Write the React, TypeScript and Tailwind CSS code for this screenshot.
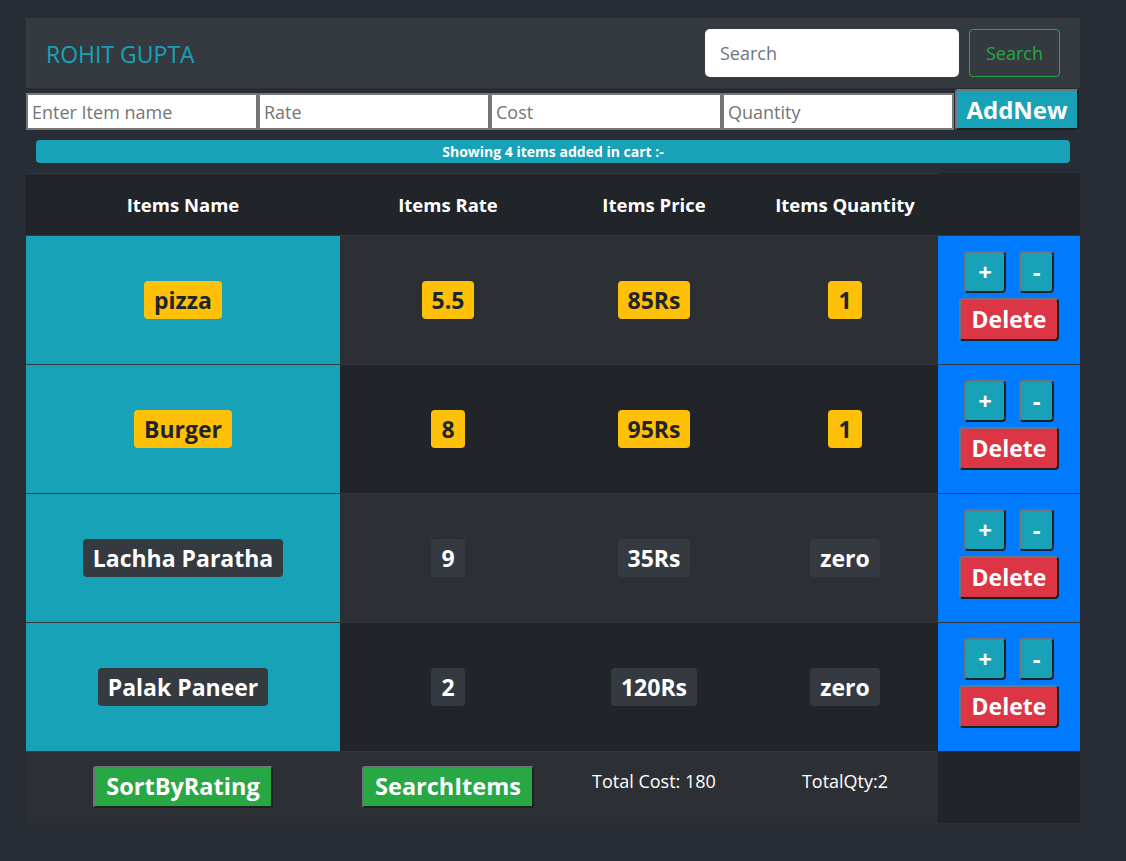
import React from 'react';

type Item = { name: string; rate: string; price: string; qty: string; hot: boolean };

const items: Item[] = [
  { name: 'pizza', rate: '5.5', price: '85Rs', qty: '1', hot: true },
  { name: 'Burger', rate: '8', price: '95Rs', qty: '1', hot: true },
  { name: 'Lachha Paratha', rate: '9', price: '35Rs', qty: 'zero', hot: false },
  { name: 'Palak Paneer', rate: '2', price: '120Rs', qty: 'zero', hot: false },
];

const font = { fontFamily: '"Open Sans", "Noto Sans", sans-serif' };

function Badge({ text, hot }: { text: string; hot: boolean }) {
  return (
    <span
      className={
        'inline-block rounded-[4px] px-[10px] h-[38px] leading-[38px] text-[23px] font-bold ' +
        (hot ? 'bg-[#ffc107] text-[#212529]' : 'bg-[#343a40] text-white')
      }
    >
      {text}
    </span>
  );
}

// +, - and Delete buttons in the last column
function ActionButtons() {
  return (
    <div className="flex flex-col items-center gap-[5px] mb-[9px]">
      <div className="flex gap-[13px]">
        <button className="w-[42px] h-[42px] rounded-[4px] bg-[#17a2b8] text-white text-[24px] font-bold border-2 border-[#6c757d] border-r-[#1d2124] border-b-[#1d2124]">
          +
        </button>
        <button className="w-[35px] h-[42px] rounded-[4px] bg-[#17a2b8] text-white text-[24px] font-bold border-2 border-[#6c757d] border-r-[#1d2124] border-b-[#1d2124]">
          -
        </button>
      </div>
      <button className="w-[100px] h-[43px] rounded-[4px] bg-[#dc3545] text-white text-[23px] font-bold border-2 border-[#6c757d] border-r-[#1d2124] border-b-[#1d2124]">
        Delete
      </button>
    </div>
  );
}

export default function App() {
  return (
    <div className="min-h-[861px] bg-[#282c34] pt-[18px]" style={font}>
      <div className="ml-[26px] w-[1054px]">
        {/* Navbar */}
        <div className="h-[70px] bg-[#343a40] flex items-center justify-between pl-[20px] pr-[20px]">
          <span className="text-[#17a2b8] text-[23px] mt-[2px]">ROHIT GUPTA</span>
          <div className="flex items-center gap-[10px]">
            <input
              className="w-[254px] h-[48px] rounded-[5px] bg-white px-[15px] text-[18px] outline-none placeholder:text-[#6c757d]"
              placeholder="Search"
            />
            <button className="w-[91px] h-[48px] rounded-[4px] border border-[#28a745] text-[#28a745] text-[18px]">
              Search
            </button>
          </div>
        </div>

        {/* Add item row */}
        <div className="flex items-start mt-[1px]">
          {['Enter Item name', 'Rate', 'Cost', 'Quantity'].map((p) => (
            <input
              key={p}
              className="mt-[4px] w-[232px] h-[37px] bg-white border-2 border-[#767676] px-[4px] text-[18px] outline-none placeholder:text-[#757575]"
              placeholder={p}
            />
          ))}
          <button className="ml-[1px] w-[124px] h-[41px] rounded-[3px] bg-[#17a2b8] text-white text-[24px] font-bold border-2 border-[#6c757d] border-r-[#1d2124] border-b-[#1d2124]">
            AddNew
          </button>
        </div>

        {/* Info bar */}
        <div className="mx-[10px] mt-[10px] h-[23px] rounded-[4px] bg-[#17a2b8] text-white text-[14px] font-bold flex items-center justify-center">
          Showing 4 items added in cart :-
        </div>

        {/* Table */}
        <div className="mt-[10px] grid grid-cols-[314px_216px_196px_186px_142px] text-white">
          {['Items Name', 'Items Rate', 'Items Price', 'Items Quantity'].map((h) => (
            <div
              key={h}
              className="h-[62px] bg-[#212529] border-t border-[#32383e] flex items-center justify-center text-[18.5px] font-bold"
            >
              {h}
            </div>
          ))}
          <div className="h-[62px] bg-[#212529]" />

          {items.map((it, i) => {
            const stripe = i % 2 === 0 ? 'bg-[#2c3034]' : 'bg-[#212529]';
            const cell = 'h-[129px] border-t border-[#32383e] flex items-center justify-center';
            return (
              <React.Fragment key={it.name}>
                <div className={cell + ' bg-[#17a2b8]'}>
                  <Badge text={it.name} hot={it.hot} />
                </div>
                <div className={cell + ' ' + stripe}>
                  <Badge text={it.rate} hot={it.hot} />
                </div>
                <div className={cell + ' ' + stripe}>
                  <Badge text={it.price} hot={it.hot} />
                </div>
                <div className={cell + ' ' + stripe}>
                  <Badge text={it.qty} hot={it.hot} />
                </div>
                <div className={cell + ' bg-[#007bff]'}>
                  <ActionButtons />
                </div>
              </React.Fragment>
            );
          })}

          {/* Footer */}
          <div className="h-[72px] bg-[#2c3034] border-t border-[#32383e] flex justify-center pt-[14px]">
            <button className="h-[42px] px-[11px] rounded-[3px] bg-[#28a745] text-white text-[23.5px] font-bold border-2 border-[#6c757d] border-r-[#1d2124] border-b-[#1d2124]">
              SortByRating
            </button>
          </div>
          <div className="h-[72px] bg-[#2c3034] border-t border-[#32383e] flex justify-center pt-[14px]">
            <button className="h-[42px] px-[11px] rounded-[3px] bg-[#28a745] text-white text-[23.5px] font-bold border-2 border-[#6c757d] border-r-[#1d2124] border-b-[#1d2124]">
              SearchItems
            </button>
          </div>
          <div className="h-[72px] bg-[#2c3034] border-t border-[#32383e] flex justify-center pt-[16px] text-[18px]">
            Total Cost: 180
          </div>
          <div className="h-[72px] bg-[#2c3034] border-t border-[#32383e] flex justify-center pt-[16px] text-[18px]">
            TotalQty:2
          </div>
          <div className="h-[72px] bg-[#212529]" />
        </div>
      </div>
    </div>
  );
}
